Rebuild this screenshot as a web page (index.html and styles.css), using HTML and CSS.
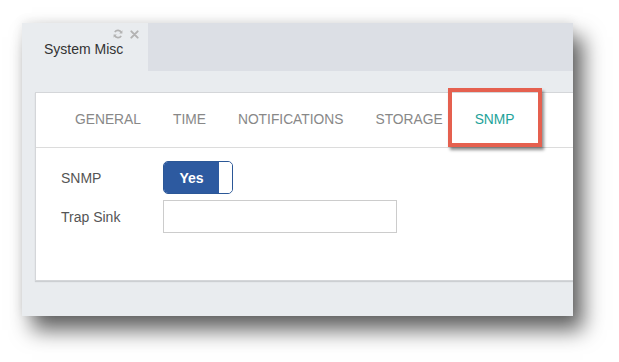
FILE: index.html
```html
<!DOCTYPE html>
<html>
<head>
<meta charset="utf-8">
<link rel="stylesheet" href="styles.css">
</head>
<body>
<div class="stage">
  <div class="window">
    <div class="header">
      <div class="tab">
        <div class="tab-icons">
          <svg class="ico" viewBox="0 0 10 10" width="10" height="10"><path d="M8.3 3.6A3.6 3.6 0 0 0 1.8 3.2M1.7 6.4A3.6 3.6 0 0 0 8.2 6.8" fill="none" stroke="#b3b3b3" stroke-width="1.6"/><path d="M9.4 1.2V4.4H6.2Z M0.6 8.8V5.6H3.8Z" fill="#b3b3b3"/></svg>
          <svg class="ico" viewBox="0 0 10 10" width="9" height="9"><path d="M1.5 1.5L8.5 8.5M8.5 1.5L1.5 8.5" stroke="#b3b3b3" stroke-width="2.2" stroke-linecap="round"/></svg>
        </div>
        <div class="tab-title">System Misc</div>
      </div>
      <div class="header-rest"></div>
    </div>
    <div class="body">
      <div class="card">
        <nav class="nav">
          <span class="nav-item">GENERAL</span>
          <span class="nav-item">TIME</span>
          <span class="nav-item">NOTIFICATIONS</span>
          <span class="nav-item">STORAGE</span>
          <span class="nav-item active">SNMP</span>
        </nav>
        <div class="form">
          <div class="row">
            <label class="label">SNMP</label>
            <div class="toggle"><span class="toggle-on">Yes</span><span class="toggle-knob"></span></div>
          </div>
          <div class="row">
            <label class="label">Trap Sink</label>
            <div class="input"></div>
          </div>
        </div>
      </div>
    </div>
  </div>
</div>
</body>
</html>
```
FILE: styles.css
```css
html, body {
  margin: 0;
  padding: 0;
  background: #ffffff;
  font-family: "Liberation Sans", Arial, sans-serif;
}
.stage {
  width: 619px;
  height: 362px;
  padding: 23px 0 0 22px;
  box-sizing: border-box;
  overflow: hidden;
}
.window {
  width: 551px;
  height: 293px;
  background: #e9ecef;
  box-shadow: 10px 14px 20px rgba(0,0,0,0.62), 0 -2px 10px rgba(0,0,0,0.08);
  display: flex;
  flex-direction: column;
  overflow: hidden;
}
.header {
  display: flex;
  height: 48px;
  flex: none;
}
.tab {
  width: 126px;
  background: #e9ecef;
  padding: 6px 9px 0 22px;
  box-sizing: border-box;
  display: flex;
  flex-direction: column;
}
.tab-icons {
  display: flex;
  justify-content: flex-end;
  align-items: center;
  gap: 7px;
  height: 10px;
}
.ico { display: block; }
.tab-title {
  margin-top: 2px;
  font-size: 14px;
  line-height: 16px;
  color: #333333;
}
.header-rest {
  flex: 1;
  background: #dcdfe5;
}
.body {
  flex: 1;
  padding: 21px 0 35px 13px;
  display: flex;
}
.card {
  flex: 1;
  background: #ffffff;
  border: 1px solid #d4d6d9;
  border-right: none;
  box-shadow: 0 1px 1px rgba(0,0,0,0.12);
}
.nav {
  display: flex;
  height: 55px;
  align-items: center;
  padding: 0 0 2px 23px;
  box-sizing: border-box;
  border-bottom: 1px solid #dcdcdc;
}
.nav-item {
  position: relative;
  padding: 0 16px;
  font-size: 13.8px;
  color: #888888;
  height: 100%;
  display: flex;
  align-items: center;
}
.nav-item.active {
  color: #1ea39a;
}
.nav-item.active::after {
  content: "";
  position: absolute;
  top: -5px;
  bottom: -2px;
  left: -11px;
  right: -11px;
  border: 4px solid #e5604f;
  box-shadow: 2px 3px 3px rgba(0,0,0,0.45);
}
.form {
  padding: 13px 0 0 25px;
  display: flex;
  flex-direction: column;
  gap: 6px;
}
.row {
  display: flex;
  align-items: center;
}
.label {
  width: 102px;
  font-size: 14px;
  color: #555555;
}
.toggle {
  width: 70px;
  height: 33px;
  box-sizing: border-box;
  border: 1px solid #2b5797;
  border-radius: 5px;
  display: flex;
  overflow: hidden;
}
.toggle-on {
  width: 55px;
  background: #2d5aa0;
  color: #ffffff;
  font-weight: bold;
  font-size: 14px;
  display: flex;
  align-items: center;
  justify-content: center;
}
.toggle-knob {
  flex: 1;
  background: #ffffff;
  border-radius: 0 4px 4px 0;
}
.input {
  width: 234px;
  height: 33px;
  box-sizing: border-box;
  border: 1px solid #cccccc;
  background: #ffffff;
}
```
